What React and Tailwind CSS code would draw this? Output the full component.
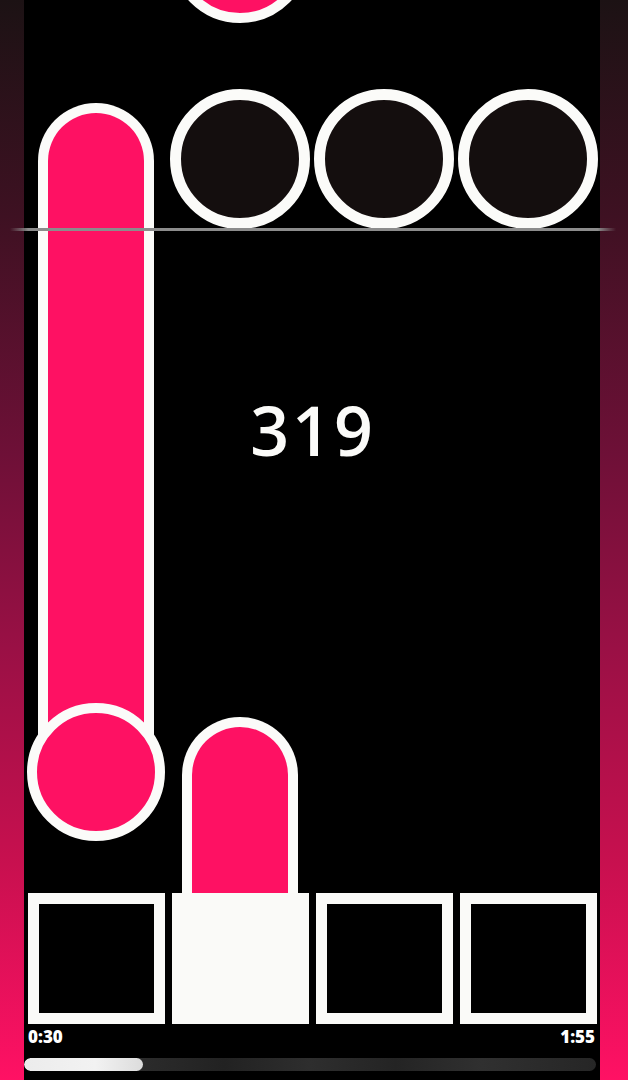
export default function App() {
  const sideBg =
    "bg-[linear-gradient(to_bottom,#1c1214_0%,#3e1122_20%,#6e1037_42%,#9a1045_60%,#c8104f_80%,#ff1164_100%)]";
  const cols = [0, 1, 2, 3];
  return (
    <div className="relative flex h-[1080px] w-[628px] overflow-hidden bg-black">
      <div className={`w-[24px] shrink-0 ${sideBg}`} />
      <div className="flex w-[576px] shrink-0 flex-col bg-black">
        {/* play field */}
        <div className="relative h-[893px] overflow-hidden">
          {/* top pink circle (falling note) */}
          <div className="absolute left-[146px] top-[-117px] h-[140px] w-[140px] rounded-full border-[10px] border-[#fbfbf9] bg-[#fe1163]" />
          {/* target circles */}
          <div className="absolute left-[146px] top-[89px] h-[140px] w-[140px] rounded-full border-[11px] border-[#fbfbf9] bg-[#140e0e]" />
          <div className="absolute left-[290px] top-[89px] h-[140px] w-[140px] rounded-full border-[11px] border-[#fbfbf9] bg-[#140e0e]" />
          <div className="absolute left-[434px] top-[89px] h-[140px] w-[140px] rounded-full border-[11px] border-[#fbfbf9] bg-[#140e0e]" />
          {/* long note column 1 */}
          <div className="absolute left-[14px] top-[103px] h-[670px] w-[116px] rounded-t-full border-[10px] border-b-0 border-[#fbfbf9] bg-[#fe1163]" />
          <div className="absolute left-[3px] top-[703px] h-[138px] w-[138px] rounded-full border-[10px] border-[#fbfbf9] bg-[#fe1163]" />
          {/* long note column 2 */}
          <div className="absolute left-[158px] top-[717px] h-[190px] w-[116px] rounded-t-full border-[10px] border-b-0 border-[#fbfbf9] bg-[#fe1163]" />
          {/* score */}
          <div className="absolute left-0 right-0 top-[396px] pl-[2px] text-center font-['Open_Sans',sans-serif] text-[68px] font-semibold leading-none tracking-[3px] text-[#fbfbf9]">
            319
          </div>
        </div>
        {/* pads */}
        <div className="flex h-[131px] gap-[7px] pl-[4px] pr-[3px]">
          {cols.map((i) => (
            <div
              key={i}
              className={
                i === 1
                  ? "h-full w-[137px] bg-[#fafaf8]"
                  : "h-full w-[137px] border-[11px] border-[#fafaf8] bg-black"
              }
            />
          ))}
        </div>
        {/* times */}
        <div className="flex h-[24px] items-center justify-between pl-[4px] pr-[5px] font-['Open_Sans',sans-serif] text-[17px] font-extrabold leading-none text-white">
          <span>0:30</span>
          <span>1:55</span>
        </div>
        {/* progress bar */}
        <div className="mt-[10px] pr-[4px]">
          <div className="relative h-[13px] w-full overflow-hidden rounded-full bg-[linear-gradient(to_right,#1c1c1c,#2c2c2c_20%,#222_35%,#2e2e2e_50%,#242424_65%,#303030_80%,#262626)]">
            <div className="h-full w-[119px] rounded-full bg-[linear-gradient(to_right,#ececec,#f2f2f2_60%,#dcdcdc)]" />
          </div>
        </div>
      </div>
      <div className={`w-[28px] shrink-0 ${sideBg}`} />
      {/* horizontal judgement line */}
      <div className="pointer-events-none absolute left-[10px] top-[228px] h-[3px] w-[606px] bg-[linear-gradient(to_right,transparent,#8c8c8c_3%,#8c8c8c_97%,transparent)]" />
    </div>
  );
}
